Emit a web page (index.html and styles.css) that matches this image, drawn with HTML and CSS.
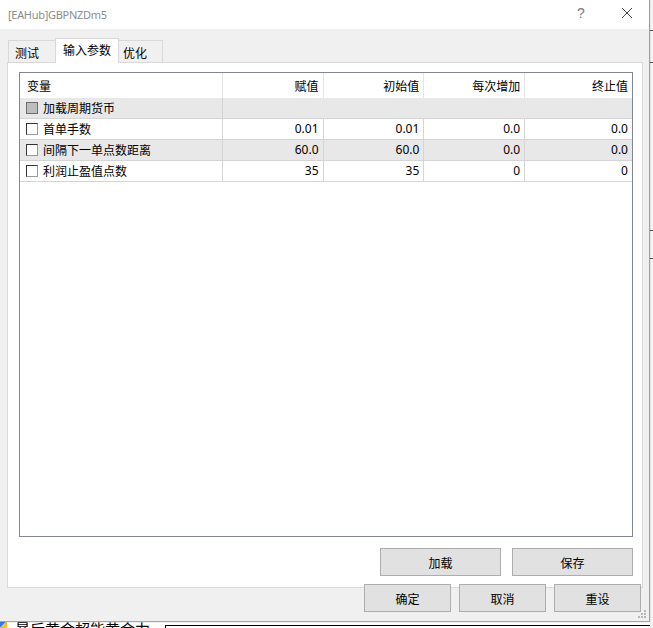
FILE: index.html
```html
<!DOCTYPE html>
<html lang="zh-CN">
<head>
<meta charset="utf-8">
<title>[EAHub]GBPNZDm5</title>
<link rel="stylesheet" href="styles.css">
</head>
<body>
<div class="desktop">
  <div class="bg-window">
    <span class="bg-icon"></span>
    <span class="bg-text">暴后黄金超能黄金力</span>
    <span class="bg-box"></span>
  </div>
  <div class="bg-right">
    <span class="bg-line l1"></span>
    <span class="bg-line l2"></span>
    <span class="bg-line l3"></span>
    <span class="bg-line l4"></span>
  </div>

  <div class="dialog">
    <div class="titlebar">
      <span class="title">[EAHub]GBPNZDm5</span>
      <span class="help">?</span>
      <svg class="close" width="12" height="12" viewBox="0 0 12 12"><path d="M1 1 L11 11 M11 1 L1 11" stroke="#444" stroke-width="1" fill="none"/></svg>
    </div>

    <div class="tabs">
      <div class="tab t1">测试</div>
      <div class="tab active">输入参数</div>
      <div class="tab t3">优化</div>
    </div>

    <div class="panel">
      <div class="list">
        <div class="row head">
          <div class="cell c1">变量</div>
          <div class="cell c2">赋值</div>
          <div class="cell c3">初始值</div>
          <div class="cell c4">每次增加</div>
          <div class="cell c5">终止值</div>
        </div>
        <div class="row grey group">
          <div class="cell c1"><span class="cb disabled"></span>加载周期货币</div>
          <div class="cell rest"></div>
        </div>
        <div class="row">
          <div class="cell c1"><span class="cb"></span>首单手数</div>
          <div class="cell c2">0.01</div>
          <div class="cell c3">0.01</div>
          <div class="cell c4">0.0</div>
          <div class="cell c5">0.0</div>
        </div>
        <div class="row grey">
          <div class="cell c1"><span class="cb"></span>间隔下一单点数距离</div>
          <div class="cell c2">60.0</div>
          <div class="cell c3">60.0</div>
          <div class="cell c4">0.0</div>
          <div class="cell c5">0.0</div>
        </div>
        <div class="row">
          <div class="cell c1"><span class="cb"></span>利润止盈值点数</div>
          <div class="cell c2">35</div>
          <div class="cell c3">35</div>
          <div class="cell c4">0</div>
          <div class="cell c5">0</div>
        </div>
      </div>
      <div class="panel-buttons">
        <button class="btn wide">加载</button>
        <button class="btn wide">保存</button>
      </div>
    </div>

    <div class="dialog-buttons">
      <button class="btn small">确定</button>
      <button class="btn small">取消</button>
      <button class="btn small">重设</button>
    </div>

    <svg class="grip" width="8" height="8" viewBox="0 0 8 8">
      <rect x="6" y="0" width="2" height="2" fill="#b8b8b8"/>
      <rect x="3" y="3" width="2" height="2" fill="#b8b8b8"/>
      <rect x="6" y="3" width="2" height="2" fill="#b8b8b8"/>
      <rect x="0" y="6" width="2" height="2" fill="#b8b8b8"/>
      <rect x="3" y="6" width="2" height="2" fill="#b8b8b8"/>
      <rect x="6" y="6" width="2" height="2" fill="#b8b8b8"/>
    </svg>
  </div>
</div>
</body>
</html>
```

FILE: styles.css
```css
html, body {
  margin: 0;
  padding: 0;
}
body {
  font-family: "Noto Sans", "Noto Sans CJK SC", sans-serif;
  font-size: 12px;
  color: #000;
  background: #fff;
}
.desktop {
  position: relative;
  width: 653px;
  height: 628px;
  overflow: hidden;
  background: #fff;
}

/* background windows peeking out */
.bg-window {
  position: absolute;
  left: 0;
  top: 621px;
  width: 653px;
  height: 7px;
  background: #fff;
  overflow: hidden;
}
.bg-icon {
  position: absolute;
  left: 0;
  top: 1px;
  width: 7px;
  height: 6px;
  background: linear-gradient(135deg, #3a7bd5 0 40%, #f2c230 40% 100%);
}
.bg-text {
  position: absolute;
  left: 15px;
  top: 0px;
  font-family: "Noto Sans CJK SC", sans-serif;
  font-size: 15px;
  line-height: 16px;
  color: #000;
}
.bg-box {
  position: absolute;
  left: 165px;
  top: 4px;
  width: 500px;
  height: 10px;
  border: 1px solid #000;
}
.bg-right {
  position: absolute;
  left: 650px;
  top: 0;
  width: 3px;
  height: 628px;
  background: #f4f4f4;
}
.bg-line {
  position: absolute;
  left: 0;
  width: 3px;
  height: 1px;
  background: #555;
}
.l1 { top: 30px; }
.l2 { top: 62px; }
.l3 { top: 230px; }
.l4 { top: 258px; }

/* dialog */
.dialog {
  position: absolute;
  left: 0;
  top: 0;
  width: 649px;
  height: 621px;
  background: #f0f0f0;
  border-right: 1px solid #a0a0a0;
  display: flex;
  flex-direction: column;
  box-shadow: 0 1px 1px rgba(0,0,0,0.35);
}
.titlebar {
  height: 29px;
  background: #fff;
  display: flex;
  align-items: center;
  position: relative;
  flex: none;
}
.title {
  margin-left: 8px;
  color: #8c8c8c;
  font-family: "Noto Sans", sans-serif;
  font-size: 11px;
  letter-spacing: -0.3px;
}
.help {
  position: absolute;
  left: 577px;
  top: 5px;
  color: #7a7a7a;
  font-family: "Liberation Sans", sans-serif;
  font-size: 14px;
}
.close {
  position: absolute;
  left: 621px;
  top: 7px;
}

/* tabs */
.tabs {
  height: 33px;
  display: flex;
  align-items: flex-end;
  padding-left: 8px;
  flex: none;
}
.tab {
  box-sizing: border-box;
  height: 22px;
  border: 1px solid #d9d9d9;
  border-bottom: none;
  background: #f0f0f0;
  font-family: "Noto Sans CJK SC", sans-serif;
  font-size: 12px;
  line-height: 20px;
  padding-top: 2px;
}
.t1 {
  width: 48px;
  padding-left: 6px;
}
.t3 {
  width: 45px;
  margin-left: -1px;
  padding-left: 4px;
}
.tab.active {
  width: 64px;
  height: 25px;
  margin-left: -1px;
  margin-bottom: -1px;
  background: #fff;
  position: relative;
  z-index: 1;
  padding-left: 7px;
  padding-top: 1px;
}

/* panel */
.panel {
  box-sizing: border-box;
  width: 636px;
  height: 526px;
  margin-left: 7px;
  border: 1px solid #d9d9d9;
  background: #fff;
  padding: 9px 9px 11px 11px;
  display: flex;
  flex-direction: column;
  flex: none;
}
.list {
  box-sizing: border-box;
  height: 465px;
  border: 1px solid #828790;
  background: #fff;
  flex: none;
}
.row {
  display: flex;
  height: 20px;
  border-bottom: 1px solid #d5d5d5;
}
.row.grey {
  background: #e8e8e8;
}
.row.head {
  height: 25px;
  border-bottom: none;
}
.cell {
  box-sizing: border-box;
  height: 100%;
  border-right: 1px solid #d5d5d5;
  text-align: right;
  padding-right: 4px;
  line-height: 20px;
  white-space: nowrap;
  font-family: "Noto Sans", "Noto Sans CJK SC", sans-serif;
}
.head .cell {
  border-right-color: #e5e5e5;
  line-height: 25px;
  font-family: "Noto Sans CJK SC", sans-serif;
}
.c1 {
  width: 203px;
  text-align: left;
  padding-left: 6px;
  display: flex;
  align-items: center;
  font-family: "Noto Sans CJK SC", sans-serif;
}
.head .c1 {
  padding-left: 7px;
}
.c2, .c3, .c4 { width: 101px; }
.c5 { width: 107px; border-right: none; }
.rest { flex: 1; border-right: none; }

.cb {
  box-sizing: border-box;
  width: 12px;
  height: 12px;
  border: 1px solid #333;
  border-right-color: #9a9a9a;
  border-bottom-color: #9a9a9a;
  background: #fff;
  margin-right: 5px;
  flex: none;
}
.cb.disabled {
  background: #bdbdbd;
  border-color: #6d6d6d;
}

/* buttons */
.panel-buttons {
  margin-top: 11px;
  display: flex;
  justify-content: flex-end;
  gap: 11px;
}
.btn {
  box-sizing: border-box;
  background: #e1e1e1;
  border: 1px solid #adadad;
  border-radius: 0;
  font-family: "Noto Sans CJK SC", sans-serif;
  font-size: 12px;
  color: #000;
  padding: 0;
  margin: 0;
}
.btn.wide {
  width: 121px;
  height: 28px;
}
.dialog-buttons {
  margin-top: -4px;
  padding-right: 8px;
  display: flex;
  justify-content: flex-end;
  gap: 8px;
  position: relative;
  z-index: 1;
}
.btn.small {
  width: 87px;
  height: 28px;
}
.grip {
  position: absolute;
  right: 3px;
  bottom: 3px;
}
```
